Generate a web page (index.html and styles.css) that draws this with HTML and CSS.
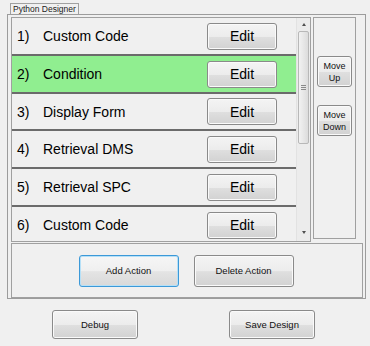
FILE: index.html
```html
<!DOCTYPE html>
<html lang="en">
<head>
  <meta charset="UTF-8">
  <title>Python Designer</title>
  <link rel="stylesheet" href="styles.css">
</head>
<body>
  <div class="tab">Python Designer</div>

  <!-- Designer group -->
  <div class="group">
    <div class="top-row">
      <div class="list-box">
        <div class="rows">
          <div class="row"><span class="num">1)</span><span class="name">Custom Code</span><button class="btn edit-btn">Edit</button></div>
          <div class="row selected"><span class="num">2)</span><span class="name">Condition</span><button class="btn edit-btn">Edit</button></div>
          <div class="row"><span class="num">3)</span><span class="name">Display Form</span><button class="btn edit-btn">Edit</button></div>
          <div class="row"><span class="num">4)</span><span class="name">Retrieval DMS</span><button class="btn edit-btn">Edit</button></div>
          <div class="row"><span class="num">5)</span><span class="name">Retrieval SPC</span><button class="btn edit-btn">Edit</button></div>
          <div class="row"><span class="num">6)</span><span class="name">Custom Code</span><button class="btn edit-btn">Edit</button></div>
        </div>
        <div class="scrollbar">
          <div class="arrow up"></div>
          <div class="thumb"><div class="grip"></div></div>
          <div class="arrow down"></div>
        </div>
      </div>

      <div class="side-panel">
        <button class="btn small-btn">Move<br>Up</button>
        <button class="btn small-btn">Move<br>Down</button>
      </div>
    </div>

    <div class="action-panel">
      <button class="btn action-btn focused">Add Action</button>
      <button class="btn action-btn">Delete Action</button>
    </div>
  </div>

  <div class="footer">
    <button class="btn footer-btn">Debug</button>
    <button class="btn footer-btn">Save Design</button>
  </div>
</body>
</html>
```

FILE: styles.css
```css
body {
  margin: 0;
  padding-top: 3px;
  background: #f0f0f0;
  font-family: "Liberation Sans", Arial, sans-serif;
  color: #000;
}
.tab {
  width: fit-content;
  margin-left: 10px;
  height: 10px;
  padding: 0 2px;
  border: 1px solid #a0a0a0;
  border-bottom: none;
  font-size: 8.5px;
  line-height: 10px;
  color: #222;
}
.group {
  margin-left: 7px;
  width: 352px;
  border: 1px solid #9c9c9c;
  padding: 2px 2px 0 3px;
  display: flex;
  flex-direction: column;
  gap: 1px;
}
.top-row {
  display: flex;
  gap: 2px;
  align-items: flex-start;
}
.list-box {
  width: 298px;
  height: 223px;
  border: 1px solid #a0a0a0;
  display: flex;
  overflow: hidden;
}
.rows {
  width: 285px;
}
.row {
  height: 36px;
  border-bottom: 2px solid #6b6b6b;
  display: flex;
  align-items: center;
  font-size: 14px;
}
.row:nth-child(3) {
  height: 35px;
}
.row.selected {
  background: #90ee90;
}
.num {
  width: 26px;
  padding-left: 5px;
}
.name {
  flex: 1;
}
.btn {
  font-family: "Liberation Sans", Arial, sans-serif;
  color: #000;
  border: 1px solid #8a8a8a;
  border-radius: 3px;
  background: linear-gradient(#f4f4f4 0%, #ececec 50%, #dfdfdf 52%, #d2d2d2 100%);
  box-shadow: inset 0 0 0 1px #fafafa;
  padding: 0;
}
.edit-btn {
  width: 70px;
  height: 27px;
  margin-right: 19px;
  font-size: 14px;
}
.scrollbar {
  width: 13px;
  background: #ececec;
  border-left: 1px solid #e2e2e2;
  display: flex;
  flex-direction: column;
  align-items: center;
}
.arrow {
  width: 0;
  height: 0;
  border-left: 2.5px solid transparent;
  border-right: 2.5px solid transparent;
}
.arrow.up {
  margin-top: 5px;
  border-bottom: 3px solid #505050;
}
.arrow.down {
  margin-top: auto;
  margin-bottom: 7px;
  border-top: 3px solid #505050;
}
.thumb {
  margin-top: 5px;
  width: 9px;
  height: 111px;
  border: 1px solid #b8b8b8;
  border-radius: 2px;
  background: linear-gradient(90deg, #f2f2f2, #dcdcdc);
  display: flex;
  align-items: center;
  justify-content: center;
}
.grip {
  width: 5px;
  height: 5px;
  background: repeating-linear-gradient(#8a8a8a 0 1px, transparent 1px 2px);
}
.side-panel {
  width: 43px;
  height: 222px;
  border: 1px solid #a0a0a0;
  display: flex;
  flex-direction: column;
  align-items: center;
  gap: 18px;
  padding-top: 38px;
  box-sizing: border-box;
}
.small-btn {
  width: 35px;
  height: 31px;
  font-size: 9px;
  line-height: 12px;
  color: #111;
}
.action-panel {
  height: 53px;
  border: 1px solid #a0a0a0;
  display: flex;
  justify-content: center;
  align-items: center;
  gap: 15px;
  padding-right: 2px;
}
.action-btn {
  width: 100px;
  height: 32px;
  font-size: 9.5px;
  color: #111;
}
.btn.focused {
  border-color: #3c99d8;
  box-shadow: inset 0 0 0 1px #b6e0f7;
  background: linear-gradient(#f6f6f6 0%, #efefef 50%, #e4e4e4 52%, #d9d9d9 100%);
}
.footer {
  display: flex;
  gap: 91px;
  padding-left: 52px;
  margin-top: 11px;
}
.footer-btn {
  width: 86px;
  height: 29px;
  font-size: 9.5px;
  color: #111;
}
```
